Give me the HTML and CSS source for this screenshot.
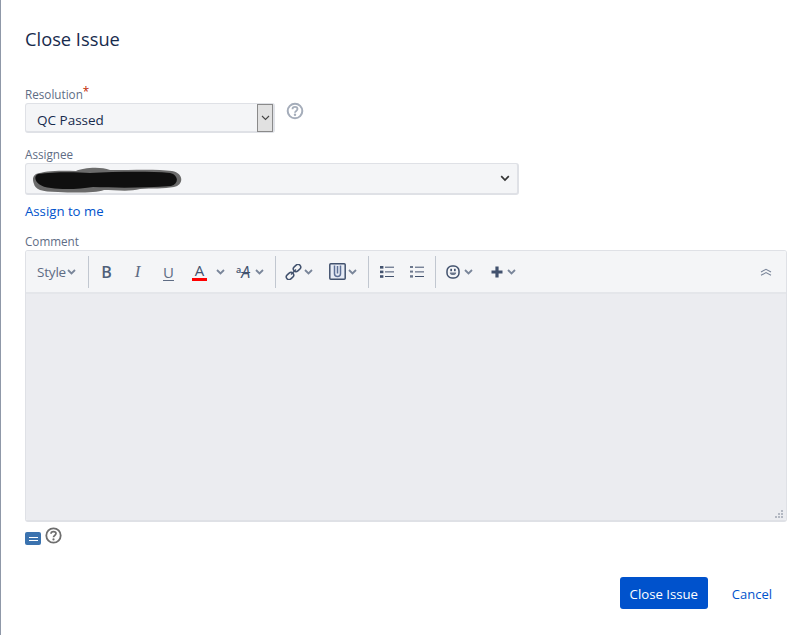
FILE: index.html
```html
<!DOCTYPE html>
<html lang="en">
<head>
<meta charset="utf-8">
<title>Close Issue</title>
<link rel="stylesheet" href="styles.css">
</head>
<body>
<div class="dialog">
  <h1 class="title">Close Issue</h1>

  <div class="field field-resolution">
    <label class="label">Resolution<span class="req">*</span></label>
    <div class="row">
      <div class="select select-res">
        <span class="select-text">QC Passed</span>
        <span class="native-arrow"><svg width="9" height="6" viewBox="0 0 9 6"><path d="M1 1l3.5 3.5L8 1" fill="none" stroke="#444" stroke-width="1.1"/></svg></span>
      </div>
      <svg class="help" width="18" height="18" viewBox="0 0 18 18"><circle cx="9" cy="9" r="7.3" fill="none" stroke="#a5adba" stroke-width="2"/><path d="M6.5 7.2c0-1.5 1.1-2.3 2.5-2.3s2.5.8 2.5 2.1c0 1.9-2.5 1.9-2.5 3.7" fill="none" stroke="#a5adba" stroke-width="1.8"/><circle cx="9" cy="12.8" r="1.2" fill="#a5adba"/></svg>
    </div>
  </div>

  <div class="field field-assignee">
    <label class="label">Assignee</label>
    <div class="select select-assignee">
      <svg class="scribble" width="150" height="28" viewBox="0 0 150 28"><path d="M3 9c8-3 22-4 40-3 6-3 24-5 34-1 24 0 48-1 62 1 12 2 12 14 2 16-10 2-22 1-34 2-10 3-26 1-36 1-8 3-30 3-46 2C8 27 2 24 1 19-1 14 0 11 3 9z" fill="#6b6b6b"/><path d="M5 9c14-2 36-2 52-1 24-1 56-2 80 0 9 2 9 11 1 13-26 2-54 2-78 1-12 2-30 3-42 1C3 22-1 12 5 9z" fill="#0f0f0f"/></svg>
      <svg class="assignee-chevron" width="10" height="7" viewBox="0 0 10 7"><path d="M1.2 1.2L5 5l3.8-3.8" fill="none" stroke="#333" stroke-width="1.7"/></svg>
    </div>
    <a class="link assign-me">Assign to me</a>
  </div>

  <div class="field field-comment">
    <label class="label">Comment</label>
    <div class="editor">
      <div class="toolbar">
        <div class="group group-style">
          <span class="style-text">Style</span>
          <svg class="chev" width="9" height="6" viewBox="0 0 9 6"><path d="M1 1l3.5 3.5L8 1" fill="none" stroke="#7a869a" stroke-width="1.8"/></svg>
        </div>
        <div class="group group-text">
          <span class="glyph bold">B</span>
          <span class="glyph italic">I</span>
          <span class="glyph under">U</span>
          <span class="color-a">A</span>
          <svg class="chev chev-color" width="9" height="6" viewBox="0 0 9 6"><path d="M1 1l3.5 3.5L8 1" fill="none" stroke="#7a869a" stroke-width="1.8"/></svg>
          <span class="more-a"><span class="small-a">a</span><span class="big-a">A</span></span>
          <svg class="chev" width="9" height="6" viewBox="0 0 9 6"><path d="M1 1l3.5 3.5L8 1" fill="none" stroke="#7a869a" stroke-width="1.8"/></svg>
        </div>
        <div class="group group-insert">
          <svg width="17" height="16" viewBox="0 0 17 16"><g fill="none" stroke="#42526e" stroke-width="1.5"><rect x="8" y="1.3" width="8" height="5.4" rx="2.7" transform="rotate(-42 12 4)"/><rect x="1" y="9.3" width="8" height="5.4" rx="2.7" transform="rotate(-42 5 12)"/><path d="M6 10.5l5-5"/></g></svg>
          <svg class="chev chev-link" width="9" height="6" viewBox="0 0 9 6"><path d="M1 1l3.5 3.5L8 1" fill="none" stroke="#7a869a" stroke-width="1.8"/></svg>
          <svg class="attach" width="17" height="17" viewBox="0 0 17 17"><rect x=".8" y=".8" width="15.4" height="15.4" rx="1" fill="#e6ebf5" stroke="#42526e" stroke-width="1.5"/><path d="M5.5 2.5v8.3c0 3.6 6 3.6 6 0V2.5M8.5 3v7.5" fill="none" stroke="#5c6f96" stroke-width="1.5"/></svg>
          <svg class="chev chev-link" width="9" height="6" viewBox="0 0 9 6"><path d="M1 1l3.5 3.5L8 1" fill="none" stroke="#7a869a" stroke-width="1.8"/></svg>
        </div>
        <div class="group group-lists">
          <svg width="14" height="12" viewBox="0 0 14 12"><g fill="#42526e"><rect y="0" width="3.4" height="2.6"/><rect y="4.6" width="3.4" height="2.6"/><rect y="9.2" width="3.4" height="2.6"/></g><path d="M5 1.2h9M5 5.9h9M5 10.5h9" stroke="#42526e" stroke-width="1"/></svg>
          <svg width="14" height="12" viewBox="0 0 14 12"><g fill="#6b778c"><rect y="0" width="3" height="2"/><rect y="4.6" width="3" height="2"/><rect y="9.2" width="3" height="2.4"/></g><path d="M5 1.2h9M5 5.9h9M5 10.5h9" stroke="#42526e" stroke-width="1"/></svg>
        </div>
        <div class="group group-end">
          <svg width="14" height="14" viewBox="0 0 14 14"><rect x="1" y="1" width="12" height="12" rx="5" fill="none" stroke="#42526e" stroke-width="1.5"/><path d="M3.8 7.4h6.4c0 3.6-6.4 3.6-6.4 0z" fill="#6b778c"/><rect x="4.3" y="3.8" width="1.7" height="2.4" fill="#42526e"/><rect x="8" y="3.8" width="1.7" height="2.4" fill="#42526e"/></svg>
          <svg class="chev chev-emoji" width="9" height="6" viewBox="0 0 9 6"><path d="M1 1l3.5 3.5L8 1" fill="none" stroke="#7a869a" stroke-width="1.8"/></svg>
          <svg class="plus" width="12" height="12" viewBox="0 0 12 12"><path d="M6 .5v11M.5 6h11" stroke="#42526e" stroke-width="3.2"/></svg>
          <svg class="chev chev-emoji" width="9" height="6" viewBox="0 0 9 6"><path d="M1 1l3.5 3.5L8 1" fill="none" stroke="#7a869a" stroke-width="1.8"/></svg>
        </div>
        <svg class="collapse" width="12" height="8" viewBox="0 0 12 8"><path d="M1 4L6 1.3 11 4M1 7.3l5-2.7 5 2.7" fill="none" stroke="#7a869a" stroke-width="1.1"/></svg>
      </div>
      <div class="editor-body">
        <svg class="resize" width="8" height="8" viewBox="0 0 8 8"><g fill="#b3b8c2"><rect x="6" y="0" width="2" height="2"/><rect x="3" y="3" width="2" height="2"/><rect x="6" y="3" width="2" height="2"/><rect x="0" y="6" width="2" height="2"/><rect x="3" y="6" width="2" height="2"/><rect x="6" y="6" width="2" height="2"/></g></svg>
      </div>
    </div>
    <div class="editor-foot">
      <span class="mode-icon"><svg width="9" height="4" viewBox="0 0 9 4"><path d="M0 .5h9M0 3.5h9" stroke="#fff" stroke-width="1"/></svg></span>
      <svg class="foot-help" width="17" height="17" viewBox="0 0 17 17"><circle cx="8.5" cy="8.5" r="7.2" fill="none" stroke="#6e6e6e" stroke-width="1.8"/><path d="M6 6.8c0-1.5 1.1-2.2 2.5-2.2s2.5.8 2.5 2c0 1.9-2.5 1.9-2.5 3.6" fill="none" stroke="#6e6e6e" stroke-width="1.7"/><circle cx="8.5" cy="12.4" r="1.1" fill="#6e6e6e"/></svg>
    </div>
  </div>

  <div class="actions">
    <button class="btn-primary" type="button">Close Issue</button>
    <a class="link cancel">Cancel</a>
  </div>
</div>
</body>
</html>
```
FILE: styles.css
```css
html, body {
  margin: 0;
  padding: 0;
  height: 100%;
  background: #fff;
}
body {
  font-family: "Open Sans", "Noto Sans", "Liberation Sans", sans-serif;
  color: #172b4d;
  overflow: hidden;
  border-left: 1px solid #8f98a8;
  box-sizing: border-box;
}
.dialog {
  padding: 27px 24px 0 24px;
  display: flex;
  flex-direction: column;
}
.title {
  margin: 0;
  font-size: 18.3px;
  line-height: 24px;
  font-weight: 400;
  color: #172b4d;
}
.field { display: flex; flex-direction: column; }
.field-resolution { margin-top: 36px; }
.field-assignee { margin-top: 14px; }
.field-comment { margin-top: 13px; }
.label {
  font-size: 11.7px;
  line-height: 14px;
  color: #5e6c84;
  height: 16px;
}
.req { color: #bf2600; position: relative; top: -3px; }
.row { display: flex; align-items: flex-start; }
.select {
  background: #f4f5f7;
  border: 1px solid #dfe1e6;
  border-width: 1px 2px 2px 1px;
  border-radius: 3px;
  box-sizing: border-box;
  display: flex;
  align-items: center;
  font-size: 13.5px;
  color: #172b4d;
  position: relative;
}
.select-res {
  width: 250px;
  height: 30px;
  padding-left: 11px;
  justify-content: space-between;
}
.select-text { position: relative; top: 2px; }
.native-arrow {
  width: 16px;
  height: 28px;
  background: #e1e1e1;
  border: 1px solid #8a8a8a;
  box-sizing: border-box;
  display: flex;
  align-items: center;
  justify-content: center;
}
.help { margin: -1px 0 0 11px; }
.select-assignee {
  width: 494px;
  height: 32px;
  padding: 0 7px;
  justify-content: flex-end;
}
.scribble { position: absolute; left: 7px; top: 1px; }
.link { color: #0052cc; font-size: 13.2px; cursor: pointer; }
.assign-me { line-height: 20px; margin-top: 6px; }
.editor {
  width: 762px;
  height: 272px;
  box-sizing: border-box;
  border: 1px solid #dfe1e6;
  border-width: 1px 1px 2px 1px;
  border-radius: 3px;
  display: flex;
  flex-direction: column;
  overflow: hidden;
}
.toolbar {
  height: 43px;
  flex: none;
  box-sizing: border-box;
  background: #f4f5f7;
  border-bottom: 2px solid #e4e6ea;
  display: flex;
  align-items: center;
  padding-left: 11px;
}
.group {
  display: flex;
  align-items: center;
  height: 32px;
  border-right: 1px solid #c1c7d0;
  flex: none;
}
.chev { flex: none; }
.group-style { width: 51px; }
.style-text { font-size: 13.5px; color: #5e6c84; letter-spacing: -0.2px; width: 30px; }
.group-text { width: 187px; padding-left: 7px; box-sizing: border-box; }
.glyph {
  font-size: 15px;
  color: #5e6c84;
  width: 31px;
  text-align: center;
  margin-left: -5px;
  margin-right: 5px;
  line-height: 20px;
}
.bold { font-weight: 600; color: #505f79; font-size: 16px; }
.italic { font-style: italic; font-family: "Liberation Serif", serif; font-size: 17px; }
.under { text-decoration: underline; text-underline-offset: 2px; }
.color-a {
  width: 15px;
  margin-left: 3px;
  font-size: 15px;
  line-height: 16px;
  color: #42526e;
  text-align: center;
  border-bottom: 3px solid #f00;
}
.chev-color { margin-left: 9px; }
.more-a { display: inline-flex; align-items: baseline; margin-left: 11px; width: 19px; color: #42526e; }
.small-a { font-size: 9px; font-weight: 600; position: relative; top: -5px; }
.big-a { font-style: italic; font-size: 16px; text-decoration: line-through; }
.group-insert { width: 93px; padding-left: 9px; box-sizing: border-box; }
.chev-link { margin-left: 2px; }
.attach { margin-left: 16px; }
.group-lists { width: 67px; padding-left: 11px; gap: 16px; box-sizing: border-box; }
.group-end { border-right: 0; padding-left: 10px; }
.chev-emoji { margin-left: 4px; }
.plus { margin-left: 18px; }
.collapse { margin-left: auto; margin-right: 14px; }
.editor-body {
  flex: 1;
  background: #ebecf0;
  position: relative;
}
.resize { position: absolute; right: 3px; bottom: 2px; }
.editor-foot { display: flex; align-items: flex-start; height: 24px; margin-top: 5px; }
.mode-icon {
  width: 16px;
  height: 13px;
  margin-top: 5px;
  background: #3b73af;
  border-radius: 2px;
  display: flex;
  align-items: center;
  justify-content: center;
}
.foot-help { margin-left: 4px; }
.actions {
  display: flex;
  align-items: center;
  justify-content: flex-end;
  margin-top: 26px;
  width: 747px;
  gap: 24px;
}
.btn-primary {
  width: 88px;
  height: 32px;
  border: 0;
  border-radius: 3px;
  background: #0052cc;
  color: #fff;
  font: 13.2px "Open Sans", "Noto Sans", sans-serif;
  padding: 1px 0 0;
}
.cancel { font-size: 13px; position: relative; top: 1px; }
```
